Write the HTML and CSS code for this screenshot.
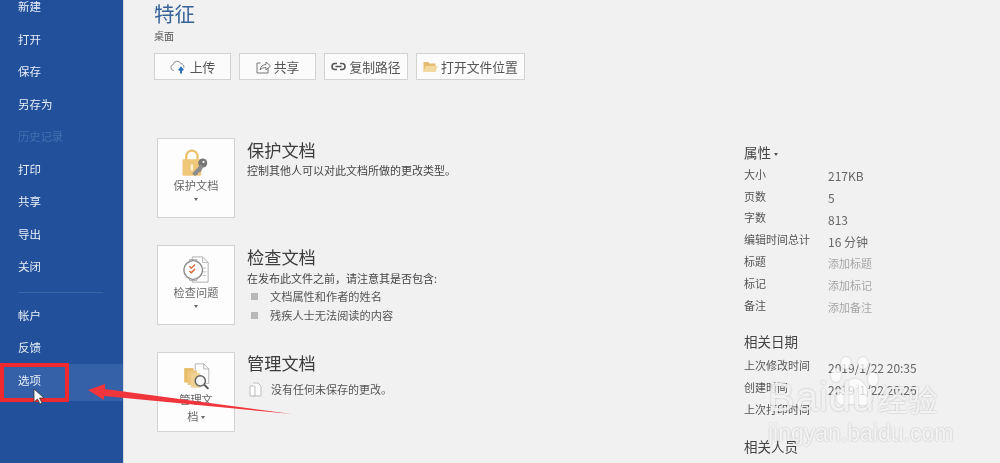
FILE: index.html
```html
<!doctype html>
<html lang="zh-CN">
<head>
  <meta charset="utf-8" />
  <title>特征</title>
  <link rel="stylesheet" href="styles.css">
</head>
<body>
<div class="app">
  <aside class="side">
    <div class="navItem">新建</div>
    <div class="navItem">打开</div>
    <div class="navItem">保存</div>
    <div class="navItem">另存为</div>
    <div class="navItem off">历史记录</div>
    <div class="navItem">打印</div>
    <div class="navItem">共享</div>
    <div class="navItem">导出</div>
    <div class="navItem">关闭</div>
    <div class="sep"></div>
    <div class="navItem">帐户</div>
    <div class="navItem">反馈</div>
    <div class="navItem active">选项</div>
  </aside>

  <main class="main">
    <section class="left">
      <h1>特征</h1>
      <div class="path">桌面</div>
      <div class="tools">
        <div class="tool t1">
          <svg width="17" height="15" viewBox="0 0 17 15"><path d="M4 11.500H3.500a3 3 0 0 1-.3-5.900 4 4 0 0 1 7.600-1 3.300 3.300 0 0 1 3 4.200" fill="none" stroke="#8a8a8a" stroke-width="1"/><path d="M11 14.500V9.500M8.800 11.300 11 8.800l2.200 2.500" fill="none" stroke="#2f6fb5" stroke-width="2"/></svg>
          上传
        </div>
        <div class="tool t2">
          <svg width="15" height="14" viewBox="0 0 15 14"><path d="M4.500 3H1v10h11V8M4 10c.5-3.500 3-5.500 6-5.500V2l4.500 4-4.500 4V7.500C8 7.500 5.500 8.200 4 10Z" fill="none" stroke="#777" stroke-width="1"/></svg>
          共享
        </div>
        <div class="tool t3">
          <svg width="15" height="9" viewBox="0 0 15 9"><path d="M6 1.500H4a3 3 0 0 0 0 6h2M9 1.500h2a3 3 0 0 1 0 6H9M4.500 4.500H10.500" fill="none" stroke="#555" stroke-width="1.600"/></svg>
          复制路径
        </div>
        <div class="tool t4">
          <svg width="15" height="12" viewBox="0 0 15 12"><path d="M.5 1h5l1 1.500h6V11H.5Z" fill="#e5bd72"/><path d="M2.500 5h12l-2 6H.5Z" fill="#f3d9a0"/></svg>
          打开文件位置
        </div>
      </div>

      <div class="block first">
        <div class="bigBtn">
          <svg class="bigIcon" width="30" height="28" viewBox="0 0 40 36">
            <path d="M7 14V9a7.500 7.500 0 0 1 15 0v5" fill="none" stroke="#eec069" stroke-width="3"/>
            <rect x="2" y="13" width="25" height="22" rx="1.500" fill="#f0c778"/>
            <rect x="13" y="20" width="3" height="8" fill="#fff3d8"/>
            <circle cx="29" cy="18" r="6" fill="#757575"/>
            <path d="M26 20 15 32l3 3 4-1 1-3 3-1 4-7Z" fill="#8c8c8c"/>
            <circle cx="30" cy="16.500" r="1.500" fill="#f1f1f1"/>
          </svg>
          <div class="bigLabel">保护文档</div>
          <div class="caret"></div>
        </div>
        <div class="info">
          <h2>保护文档</h2>
          <p>控制其他人可以对此文档所做的更改类型。</p>
        </div>
      </div>

      <div class="block second">
        <div class="bigBtn">
          <svg class="bigIcon" width="28" height="28" viewBox="0 0 28 30">
            <path d="M10 1h11l6 6v21H10Z" fill="#fff" stroke="#aaa"/>
            <path d="M21 1v6h6M21 13h4M21 17h4M21 21h4" fill="none" stroke="#bbb"/>
            <circle cx="11" cy="15" r="10" fill="#fff" stroke="#8a8a8a" stroke-width="1.500"/>
            <path d="M7 7V4h8v3M7 23v3h8v-3" fill="none" stroke="#9a9a9a"/>
            <path d="M7 11l2 2 4-4M7 16l2 2 4-4" fill="none" stroke="#d5662f" stroke-width="1.500"/>
          </svg>
          <div class="bigLabel">检查问题</div>
          <div class="caret"></div>
        </div>
        <div class="info">
          <h2>检查文档</h2>
          <p>在发布此文件之前，请注意其是否包含:</p>
          <ul>
            <li>文档属性和作者的姓名</li>
            <li>残疾人士无法阅读的内容</li>
          </ul>
        </div>
      </div>

      <div class="block third">
        <div class="bigBtn">
          <svg class="bigIcon" width="29" height="28" viewBox="0 0 31 33">
            <path d="M14 1h10l6 6v17H14Z" fill="#fff" stroke="#aaa"/>
            <path d="M24 1v6h6" fill="none" stroke="#aaa"/>
            <rect x="1" y="6" width="11" height="17" fill="#e8bd69"/>
            <rect x="5" y="9" width="11" height="17" fill="#eec67e"/>
            <rect x="9" y="12" width="11" height="17" fill="#f1d093"/>
            <circle cx="20" cy="21" r="6" fill="#f8f8f8" stroke="#666" stroke-width="1.800"/>
            <path d="m24.500 25.500 5 5" stroke="#555" stroke-width="2.400"/>
          </svg>
          <div class="bigLabel wrapLabel">管理文<br>档 <span class="caret inline"></span></div>
        </div>
        <div class="info">
          <h2>管理文档</h2>
          <div class="noChange">
            <svg width="13" height="15" viewBox="0 0 13 15"><path d="M4 1h5l3 3v10H4M1 4h5v10H1Z" fill="#fff" stroke="#bbb"/></svg>
            没有任何未保存的更改。
          </div>
        </div>
      </div>
    </section>

    <section class="right">
      <h3>属性 <span class="caret inline dark"></span></h3>
      <div class="prop"><span class="k">大小</span><span class="v">217KB</span></div>
      <div class="prop"><span class="k">页数</span><span class="v">5</span></div>
      <div class="prop"><span class="k">字数</span><span class="v">813</span></div>
      <div class="prop"><span class="k">编辑时间总计</span><span class="v">16 分钟</span></div>
      <div class="prop"><span class="k">标题</span><span class="v add">添加标题</span></div>
      <div class="prop"><span class="k">标记</span><span class="v add">添加标记</span></div>
      <div class="prop"><span class="k">备注</span><span class="v add">添加备注</span></div>

      <h3 class="dates">相关日期</h3>
      <div class="prop"><span class="k">上次修改时间</span><span class="v">2019/1/22 20:35</span></div>
      <div class="prop"><span class="k">创建时间</span><span class="v">2019/1/22 20:26</span></div>
      <div class="prop"><span class="k">上次打印时间</span></div>

      <h3 class="people">相关人员</h3>
    </section>
  </main>

  <div class="redBox"></div>
  <svg class="cursor" width="14" height="18" viewBox="0 0 14 18"><path d="M1 1v13l3.500-3 2.500 5 2-1-2.500-5H11Z" fill="#fff" stroke="#333" stroke-width=".8"/></svg>
  <svg class="arrow" width="210" height="40" viewBox="0 0 210 40"><path d="M0 13 17 7v5l187 25L16 19v4Z" fill="#f0353c"/></svg>

  <div class="mark">
    <svg class="paw" width="50" height="54" viewBox="0 0 50 54" fill="#fff">
      <ellipse cx="6" cy="18" rx="5" ry="7"/>
      <ellipse cx="16" cy="6" rx="5" ry="6"/>
      <ellipse cx="33" cy="6" rx="5" ry="6"/>
      <ellipse cx="43" cy="22" rx="5" ry="7"/>
      <path d="M25 22c8 0 10 8 15 12 6 6 2 15-7 14-5 0-12-2-17 0-9 1-12-8-7-14 6-4 8-12 16-12Z"/>
    </svg>
    <div class="markTop"><span>Baidu</span><span class="markCn">经验</span></div>
    <div class="markUrl">jingyan.baidu.com</div>
  </div>
</div>
</body>
</html>
```

FILE: styles.css
```css
*{box-sizing:border-box}
html,body{margin:0;height:100%;overflow:hidden}
body{
  font-family:"Noto Sans CJK SC","Liberation Sans",sans-serif;
  background:#f1f1f1;
  color:#444;
}

.app{position:relative;display:flex;width:1000px;height:463px;overflow:hidden;filter:blur(.5px)}

/* ===== SIDEBAR ===== */
.side{
  flex:none;
  width:124px;
  height:100%;
  background:#22509b;
  color:#e8eef7;
  border-right:1px solid #d8d8d8;
}
.navItem{
  height:32.500px;
  line-height:32.500px;
  padding-left:18px;
  font-size:11.500px;
  position:relative;
  top:-10px;
}
.navItem.off{color:#4570b0;font-size:11.250px}
.navItem.active{background:#3561a8;height:37px}
.sep{height:1px;width:85px;margin:9px 0 6px 18px;background:#3d66a8;position:relative;top:-10px}

/* ===== MAIN ===== */
.main{flex:1;display:flex;min-width:0}
.left{width:620px;padding-left:30px}
h1{margin:0;font-size:20.500px;line-height:26px;font-weight:400;color:#376399}
.path{font-size:10px;line-height:14px;margin-top:3px;color:#555}

.tools{display:flex;gap:8px;margin-top:10px}
.tool{
  height:27px;
  display:flex;
  align-items:center;
  justify-content:center;
  gap:3px;
  background:#fbfbfb;
  border:1px solid #d2d2d2;
  font-size:12.800px;
  color:#555;
}
.t1,.t2{width:77px}
.t3{width:84px}
.t4{width:109px}

.block{display:flex;margin-left:3px}
.first{margin-top:58px}
.second{margin-top:27px}
.third{margin-top:27px}
.bigBtn{
  flex:none;
  width:78px;
  height:80px;
  background:#fdfdfd;
  border:1px solid #d2d2d2;
  display:flex;
  flex-direction:column;
  align-items:center;
  padding-top:10px;
  color:#666;
}
.bigIcon{flex:none}
.bigLabel{font-size:11.200px;line-height:15px;margin-top:1px;text-align:center}
.wrapLabel{line-height:17px;margin-top:0}
.caret{
  width:0;height:0;
  margin-top:5px;
  border-left:2.500px solid transparent;
  border-right:2.500px solid transparent;
  border-top:3px solid #666;
}
.caret.inline{display:inline-block;margin:0;vertical-align:middle}
.caret.dark{border-top-color:#555}

.info{margin-left:12px}
h2{margin:0;font-size:17.200px;line-height:24px;font-weight:400;color:#3c3c3c}
.info p{margin:0;font-size:11px;line-height:16px;color:#444}
.second h2{margin-top:0;margin-bottom:1px}
.third h2{margin-top:-1px}
.info ul{list-style:none;margin:1px 0 0;padding:0}
.info li{
  display:flex;
  align-items:center;
  font-size:11.200px;
  line-height:19px;
  color:#555;
  padding-left:4px;
}
.info li::before{
  content:"";
  width:7px;height:7px;
  margin-right:12px;
  background:#b8b8b8;
}
.noChange{display:flex;align-items:center;gap:9px;margin:6px 0 0 2px;font-size:11px;line-height:16px;color:#555}

/* ===== RIGHT COLUMN ===== */
.right{flex:1;padding-top:141px}
h3{margin:0;font-size:13.500px;line-height:22px;font-weight:400;color:#444}
.prop{display:flex;height:21.800px;align-items:center;font-size:11px;color:#555;white-space:nowrap}
.prop .k{width:84px;flex:none}
.prop .v{font-size:12px;color:#666;position:relative;top:2px}
.prop .add{font-size:11px;color:#a6a6a6}
.dates{margin-top:14px;margin-bottom:3px}
.people{margin-top:15px}

/* ===== OVERLAYS ===== */
.redBox{position:absolute;left:0;top:363px;width:69px;height:39px;border:4.500px solid #ee2a2e}
.cursor{position:absolute;left:33px;top:388px}
.arrow{position:absolute;left:88px;top:377px}

.mark{
  position:absolute;
  left:768px;
  top:353px;
  width:190px;
  color:rgba(255,255,255,.8);
  text-shadow:0 0 2px rgba(0,0,0,.28);
}
.paw{position:absolute;left:62px;top:4px;opacity:.72;filter:drop-shadow(0 0 1px rgba(0,0,0,.25))}
.markTop{position:relative;padding-top:25px;font-size:40px;line-height:38px;letter-spacing:1px;font-family:"Liberation Sans",sans-serif;white-space:nowrap}
.markCn{font-family:"Noto Sans CJK SC",sans-serif;font-size:30px;margin-left:2px;letter-spacing:0}
.markUrl{position:relative;font-size:23px;line-height:26px;margin-top:3px;font-family:"Liberation Sans",sans-serif;white-space:nowrap}
```
